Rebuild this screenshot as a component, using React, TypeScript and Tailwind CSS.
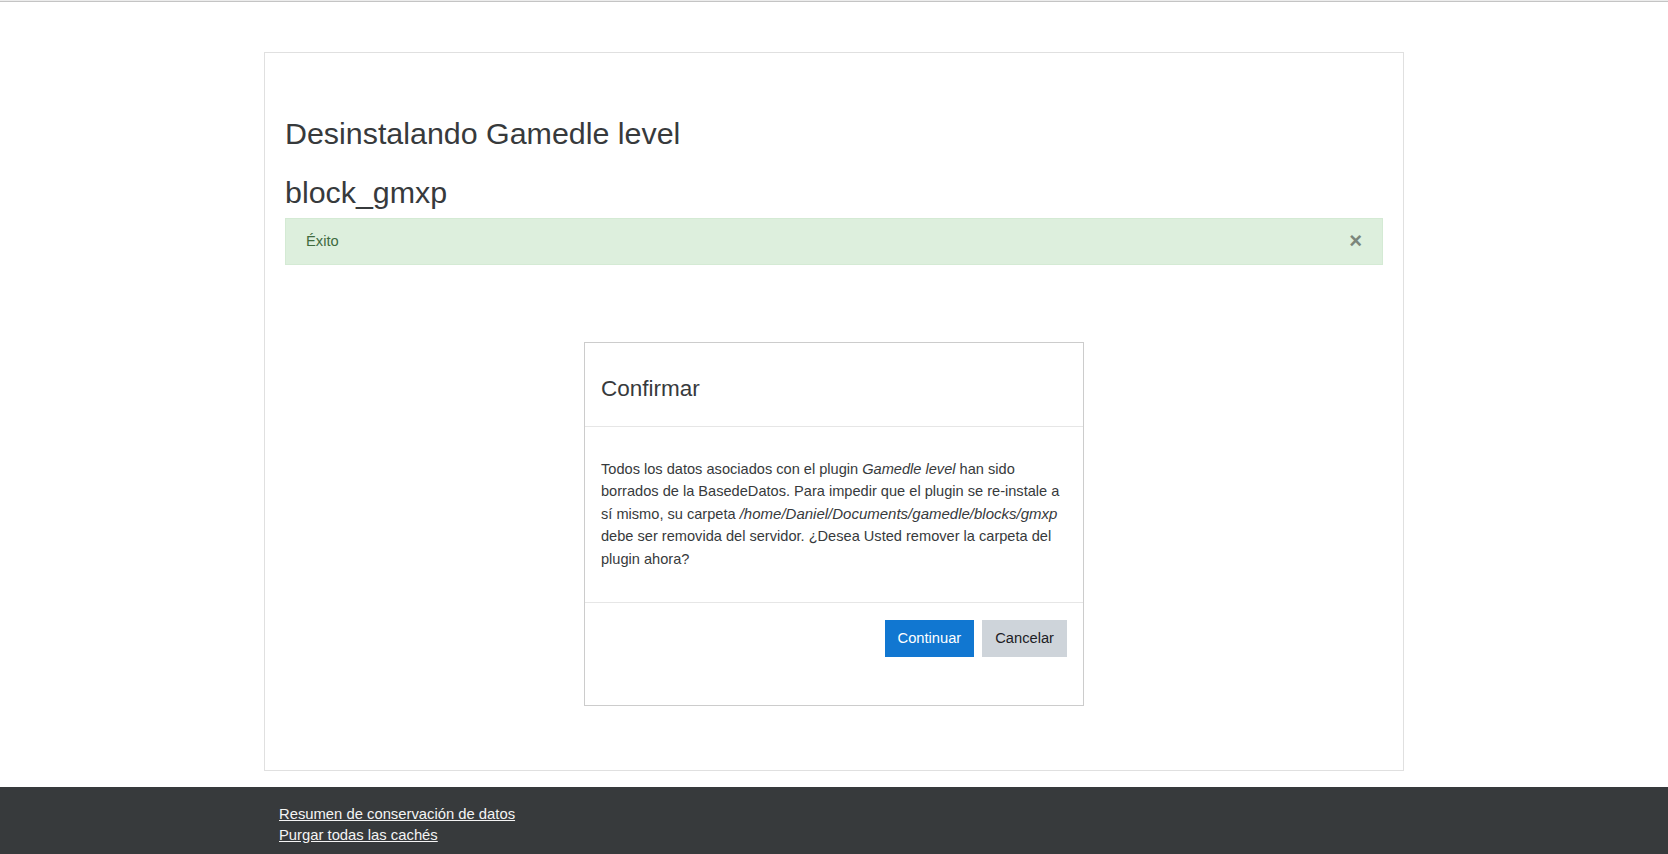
export default function App() {
  return (
    <div
      className="min-h-screen bg-white text-[#373a3c]"
      style={{ fontFamily: '"Liberation Sans", Arial, sans-serif' }}
    >
      {/* top edge of the hidden navbar */}
      <div className="h-[2px] bg-[#ececec] border-b border-[#c4c4c4]" />

      <div className="w-[1140px] mx-auto mt-[50px] border border-[#e0e0e0] p-5">
        <h2 className="mt-[42px] text-[30.4px] leading-[36px] font-normal">
          Desinstalando Gamedle level
        </h2>
        <h2 className="mt-[23px] text-[30.4px] leading-[36px] font-normal">block_gmxp</h2>

        <div className="mt-2 flex items-center justify-between border border-[#d4ead4] bg-[#ddefdd] px-5 py-[11px] text-[14.7px] leading-[22.5px] text-[#3f6b3f]">
          <span>Éxito</span>
          <button className="text-[22px] leading-[22px] font-bold text-[#7b867b]">×</button>
        </div>

        {/* confirm box */}
        <div className="w-[500px] mx-auto mt-[77px] mb-[44px] border border-[#cccccc] bg-white">
          <div className="px-4 pt-[32px] pb-[24px] border-b border-[#e6e6e6]">
            <h4 className="text-[22.5px] leading-[27px] font-normal">Confirmar</h4>
          </div>
          <div className="px-4 pt-[31px] pb-[32px] border-b border-[#e6e6e6] text-[14.6px] leading-[22.5px] whitespace-nowrap">
            <p>
              Todos los datos asociados con el plugin <em>Gamedle level</em> han sido
              <br />
              borrados de la BasedeDatos. Para impedir que el plugin se re-instale a
              <br />
              sí mismo, su carpeta{' '}
              <em className="text-[15px]">/home/Daniel/Documents/gamedle/blocks/gmxp</em>
              <br />
              debe ser removida del servidor. ¿Desea Usted remover la carpeta del
              <br />
              plugin ahora?
            </p>
          </div>
          <div className="flex justify-end gap-2 px-4 pt-[17px] pb-[48px]">
            <button className="border border-[#1177d1] bg-[#1177d1] px-3 py-[6px] text-[14.7px] leading-[22.5px] text-white">
              Continuar
            </button>
            <button className="border border-[#ced4da] bg-[#ced4da] px-3 py-[6px] text-[14.7px] leading-[22.5px] text-[#1d2125]">
              Cancelar
            </button>
          </div>
        </div>
      </div>

      <footer className="mt-4 bg-[#373a3c] pt-[17px] pb-8">
        <div className="w-[1140px] mx-auto px-[15px] text-[14.8px] leading-[21px] text-[#f4f4f4]">
          <div>
            <a href="#" className="underline">Resumen de conservación de datos</a>
          </div>
          <div>
            <a href="#" className="underline">Purgar todas las cachés</a>
          </div>
        </div>
      </footer>
    </div>
  );
}
